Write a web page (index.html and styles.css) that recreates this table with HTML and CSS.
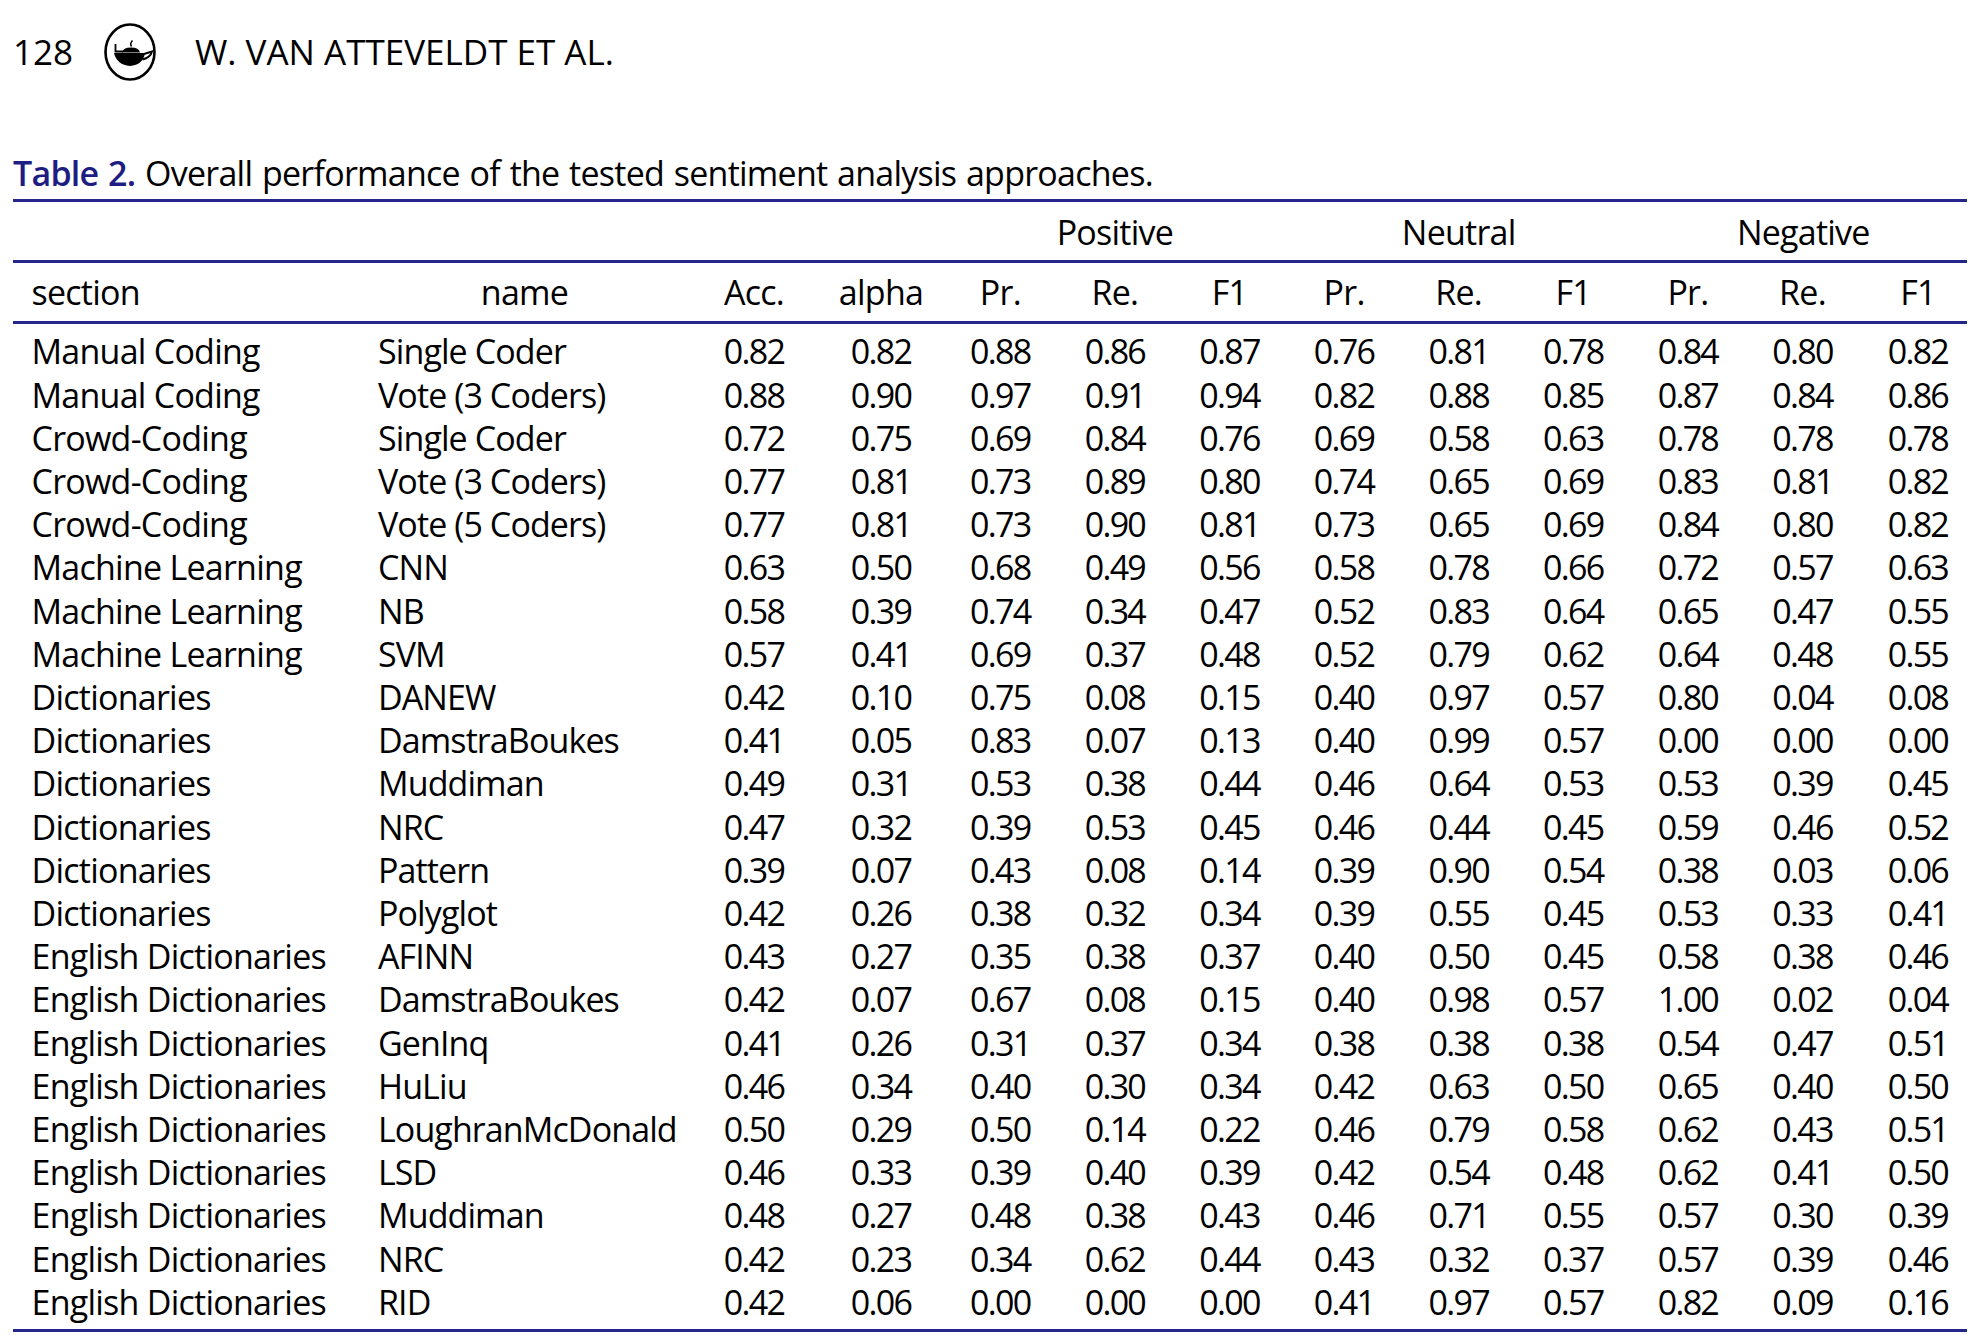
FILE: index.html
```html
<!DOCTYPE html>
<html lang="en">
<head>
<meta charset="utf-8">
<title>Table 2. Overall performance of the tested sentiment analysis approaches</title>
<link rel="stylesheet" href="styles.css">
</head>
<body>
<div class="page">
  <header class="running-head">
    <span class="folio">128</span>
    <svg class="logo" viewBox="0 0 54 60" width="54" height="60" aria-hidden="true">
      <ellipse cx="27" cy="30" rx="24.5" ry="27.5" fill="none" stroke="#000" stroke-width="2.6"/>
      <path d="M11 31 H42 Q40 43 27 44 Q14 43 11 31 Z" fill="#000"/>
      <path d="M41 32 L49 29.5 Q47.5 35.5 39.5 37.5" fill="none" stroke="#000" stroke-width="2"/>
      <path d="M19 30.5 Q20 25.5 28 25.5 Q36 25.5 37 30.5 Z" fill="#000"/>
      <path d="M28.5 24.5 Q26.5 21.5 29.5 18.5" fill="none" stroke="#000" stroke-width="1.5"/>
      <path d="M12.5 22 V29.5 H20" fill="none" stroke="#000" stroke-width="1.8"/>
    </svg>
    <span class="authors">W. VAN ATTEVELDT ET AL.</span>
  </header>

  <p class="caption"><span class="label">Table 2.</span> Overall performance of the tested sentiment analysis approaches.</p>

  <table class="results">
    <colgroup>
      <col class="c-sec"><col class="c-nm"><col class="c-acc"><col class="c-alpha">
      <col class="c-m"><col class="c-m"><col class="c-m">
      <col class="c-m"><col class="c-m"><col class="c-m">
      <col class="c-m"><col class="c-m"><col class="c-last">
    </colgroup>
    <thead>
      <tr class="groups">
        <th colspan="4"></th>
        <th colspan="3">Positive</th>
        <th colspan="3">Neutral</th>
        <th colspan="3" class="last">Negative</th>
      </tr>
      <tr class="cols">
        <th class="sec">section</th>
        <th class="nm">name</th>
        <th>Acc.</th>
        <th>alpha</th>
        <th>Pr.</th><th>Re.</th><th>F1</th>
        <th>Pr.</th><th>Re.</th><th>F1</th>
        <th>Pr.</th><th>Re.</th><th class="last">F1</th>
      </tr>
    </thead>
    <tbody>
      <tr><td class="sec">Manual Coding</td><td class="nm">Single Coder</td><td>0.82</td><td>0.82</td><td>0.88</td><td>0.86</td><td>0.87</td><td>0.76</td><td>0.81</td><td>0.78</td><td>0.84</td><td>0.80</td><td class="last">0.82</td></tr>
      <tr><td class="sec">Manual Coding</td><td class="nm">Vote (3 Coders)</td><td>0.88</td><td>0.90</td><td>0.97</td><td>0.91</td><td>0.94</td><td>0.82</td><td>0.88</td><td>0.85</td><td>0.87</td><td>0.84</td><td class="last">0.86</td></tr>
      <tr><td class="sec">Crowd-Coding</td><td class="nm">Single Coder</td><td>0.72</td><td>0.75</td><td>0.69</td><td>0.84</td><td>0.76</td><td>0.69</td><td>0.58</td><td>0.63</td><td>0.78</td><td>0.78</td><td class="last">0.78</td></tr>
      <tr><td class="sec">Crowd-Coding</td><td class="nm">Vote (3 Coders)</td><td>0.77</td><td>0.81</td><td>0.73</td><td>0.89</td><td>0.80</td><td>0.74</td><td>0.65</td><td>0.69</td><td>0.83</td><td>0.81</td><td class="last">0.82</td></tr>
      <tr><td class="sec">Crowd-Coding</td><td class="nm">Vote (5 Coders)</td><td>0.77</td><td>0.81</td><td>0.73</td><td>0.90</td><td>0.81</td><td>0.73</td><td>0.65</td><td>0.69</td><td>0.84</td><td>0.80</td><td class="last">0.82</td></tr>
      <tr><td class="sec">Machine Learning</td><td class="nm">CNN</td><td>0.63</td><td>0.50</td><td>0.68</td><td>0.49</td><td>0.56</td><td>0.58</td><td>0.78</td><td>0.66</td><td>0.72</td><td>0.57</td><td class="last">0.63</td></tr>
      <tr><td class="sec">Machine Learning</td><td class="nm">NB</td><td>0.58</td><td>0.39</td><td>0.74</td><td>0.34</td><td>0.47</td><td>0.52</td><td>0.83</td><td>0.64</td><td>0.65</td><td>0.47</td><td class="last">0.55</td></tr>
      <tr><td class="sec">Machine Learning</td><td class="nm">SVM</td><td>0.57</td><td>0.41</td><td>0.69</td><td>0.37</td><td>0.48</td><td>0.52</td><td>0.79</td><td>0.62</td><td>0.64</td><td>0.48</td><td class="last">0.55</td></tr>
      <tr><td class="sec">Dictionaries</td><td class="nm">DANEW</td><td>0.42</td><td>0.10</td><td>0.75</td><td>0.08</td><td>0.15</td><td>0.40</td><td>0.97</td><td>0.57</td><td>0.80</td><td>0.04</td><td class="last">0.08</td></tr>
      <tr><td class="sec">Dictionaries</td><td class="nm">DamstraBoukes</td><td>0.41</td><td>0.05</td><td>0.83</td><td>0.07</td><td>0.13</td><td>0.40</td><td>0.99</td><td>0.57</td><td>0.00</td><td>0.00</td><td class="last">0.00</td></tr>
      <tr><td class="sec">Dictionaries</td><td class="nm">Muddiman</td><td>0.49</td><td>0.31</td><td>0.53</td><td>0.38</td><td>0.44</td><td>0.46</td><td>0.64</td><td>0.53</td><td>0.53</td><td>0.39</td><td class="last">0.45</td></tr>
      <tr><td class="sec">Dictionaries</td><td class="nm">NRC</td><td>0.47</td><td>0.32</td><td>0.39</td><td>0.53</td><td>0.45</td><td>0.46</td><td>0.44</td><td>0.45</td><td>0.59</td><td>0.46</td><td class="last">0.52</td></tr>
      <tr><td class="sec">Dictionaries</td><td class="nm">Pattern</td><td>0.39</td><td>0.07</td><td>0.43</td><td>0.08</td><td>0.14</td><td>0.39</td><td>0.90</td><td>0.54</td><td>0.38</td><td>0.03</td><td class="last">0.06</td></tr>
      <tr><td class="sec">Dictionaries</td><td class="nm">Polyglot</td><td>0.42</td><td>0.26</td><td>0.38</td><td>0.32</td><td>0.34</td><td>0.39</td><td>0.55</td><td>0.45</td><td>0.53</td><td>0.33</td><td class="last">0.41</td></tr>
      <tr><td class="sec">English Dictionaries</td><td class="nm">AFINN</td><td>0.43</td><td>0.27</td><td>0.35</td><td>0.38</td><td>0.37</td><td>0.40</td><td>0.50</td><td>0.45</td><td>0.58</td><td>0.38</td><td class="last">0.46</td></tr>
      <tr><td class="sec">English Dictionaries</td><td class="nm">DamstraBoukes</td><td>0.42</td><td>0.07</td><td>0.67</td><td>0.08</td><td>0.15</td><td>0.40</td><td>0.98</td><td>0.57</td><td>1.00</td><td>0.02</td><td class="last">0.04</td></tr>
      <tr><td class="sec">English Dictionaries</td><td class="nm">GenInq</td><td>0.41</td><td>0.26</td><td>0.31</td><td>0.37</td><td>0.34</td><td>0.38</td><td>0.38</td><td>0.38</td><td>0.54</td><td>0.47</td><td class="last">0.51</td></tr>
      <tr><td class="sec">English Dictionaries</td><td class="nm">HuLiu</td><td>0.46</td><td>0.34</td><td>0.40</td><td>0.30</td><td>0.34</td><td>0.42</td><td>0.63</td><td>0.50</td><td>0.65</td><td>0.40</td><td class="last">0.50</td></tr>
      <tr><td class="sec">English Dictionaries</td><td class="nm">LoughranMcDonald</td><td>0.50</td><td>0.29</td><td>0.50</td><td>0.14</td><td>0.22</td><td>0.46</td><td>0.79</td><td>0.58</td><td>0.62</td><td>0.43</td><td class="last">0.51</td></tr>
      <tr><td class="sec">English Dictionaries</td><td class="nm">LSD</td><td>0.46</td><td>0.33</td><td>0.39</td><td>0.40</td><td>0.39</td><td>0.42</td><td>0.54</td><td>0.48</td><td>0.62</td><td>0.41</td><td class="last">0.50</td></tr>
      <tr><td class="sec">English Dictionaries</td><td class="nm">Muddiman</td><td>0.48</td><td>0.27</td><td>0.48</td><td>0.38</td><td>0.43</td><td>0.46</td><td>0.71</td><td>0.55</td><td>0.57</td><td>0.30</td><td class="last">0.39</td></tr>
      <tr><td class="sec">English Dictionaries</td><td class="nm">NRC</td><td>0.42</td><td>0.23</td><td>0.34</td><td>0.62</td><td>0.44</td><td>0.43</td><td>0.32</td><td>0.37</td><td>0.57</td><td>0.39</td><td class="last">0.46</td></tr>
      <tr><td class="sec">English Dictionaries</td><td class="nm">RID</td><td>0.42</td><td>0.06</td><td>0.00</td><td>0.00</td><td>0.00</td><td>0.41</td><td>0.97</td><td>0.57</td><td>0.82</td><td>0.09</td><td class="last">0.16</td></tr>
    </tbody>
  </table>
</div>
</body>
</html>
```

FILE: styles.css
```css
html, body {
  margin: 0;
  padding: 0;
  background: #ffffff;
}

body {
  font-family: "Open Sans", "Liberation Sans", sans-serif;
  font-size: 35px;
  color: #000000;
}

.page {
  width: 1954px;
  padding: 30px 0 0 13px;
}

.running-head {
  display: flex;
  align-items: center;
  height: 43px;
  line-height: 43px;
}

.folio {
  width: 90px;
}

.logo {
  display: block;
  width: 54px;
  height: 60px;
  margin-right: 38px;
}

.caption,
.results {
  font-size: 34px;
  letter-spacing: -0.75px;
}

.caption {
  margin: 79px 0 4px;
  line-height: 43px;
  word-spacing: 1.6px;
}

.caption .label {
  color: #1d1d82;
  font-weight: 600;
}

.results {
  width: 1954px;
  table-layout: fixed;
  border-collapse: separate;
  border-spacing: 0;
  border-top: 3px solid #25258c;
  border-bottom: 3px solid #25258c;
}

.c-sec { width: 347px; }
.c-nm { width: 329px; }
.c-acc { width: 130px; }
.c-alpha { width: 124px; }
.c-m { width: 114.6px; }
.c-last { width: 107.2px; }

.results th,
.results td {
  padding: 0;
  font-weight: normal;
  line-height: 43.2px;
  text-align: center;
  white-space: nowrap;
}

.results td {
  letter-spacing: -1.7px;
}

.results .groups th {
  padding-top: 9px;
  padding-bottom: 6px;
  border-bottom: 3px solid #25258c;
}

.results .cols th {
  padding-top: 8px;
  padding-bottom: 6.5px;
  border-bottom: 3px solid #25258c;
}

.results tbody tr:first-child td {
  padding-top: 6.5px;
}

.results tbody tr:last-child td {
  padding-bottom: 5px;
}

.results .sec {
  text-align: left;
  padding-left: 18.5px;
  letter-spacing: -0.75px;
}

.results td.nm {
  text-align: left;
  padding-left: 18px;
  letter-spacing: -0.9px;
}

.results th.nm {
  text-align: center;
}

.results .last {
  padding-left: 9px;
}
```
